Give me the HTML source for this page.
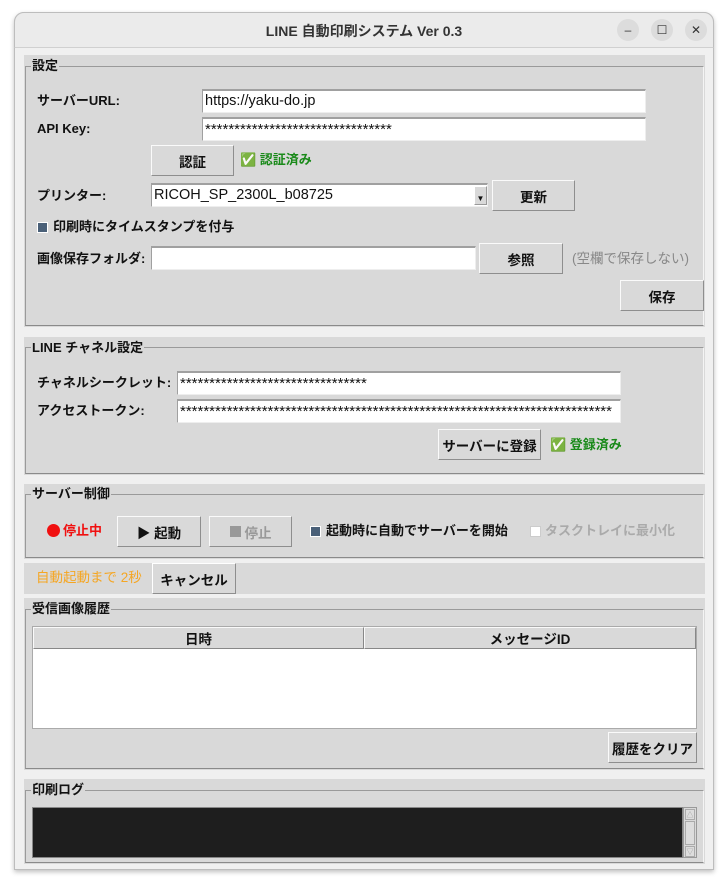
<!DOCTYPE html>
<html><head><meta charset="utf-8"><style>
*{box-sizing:border-box;margin:0;padding:0}
body{width:728px;height:886px;background:#fff;position:relative;overflow:hidden;font-family:"Liberation Sans","Noto Sans CJK JP",sans-serif;font-size:13px;color:#111}
.a{position:absolute}
.win{left:14px;top:12px;width:700px;height:858px;background:#f0f0f0;border:1px solid #bdbdbd;border-radius:10px 10px 0 0;box-shadow:0 2px 5px rgba(0,0,0,.25)}
.tb{left:14px;top:12px;width:700px;height:36px;background:#ebebeb;border-radius:10px 10px 0 0;border:1px solid #bdbdbd;border-bottom:1px solid #d0d0d0;text-align:center;line-height:36px;font-weight:bold;font-size:14px;color:#333}
.cb{width:22px;height:22px;border-radius:50%;background:#dcdcdc;top:19px;text-align:center;line-height:22px;font-size:12px;color:#333}
.sec{background:#d9d9d9;left:24px;width:681px}
.fr{border:1px solid #9a9a9a;border-right-color:#f4f4f4;border-bottom-color:#8a8a8a;left:25px;width:679px}
.lg{background:#d9d9d9;font-weight:bold;padding:0 1px;line-height:16px}
.t{font-weight:bold;line-height:16px;white-space:nowrap}
.e{background:#fff;border-top:2px solid #a0a0a0;border-left:1px solid #a0a0a0;border-right:1px solid #eee;border-bottom:1px solid #eee;padding-left:2px;line-height:20px;white-space:nowrap;overflow:hidden;font-size:14.5px}
.s{font-size:15px;line-height:22px;letter-spacing:0}
.b{background:#d9d9d9;border:1px solid #8e8e8e;border-top-color:#fafafa;border-left-color:#fafafa;text-align:center;font-weight:bold;display:flex;align-items:center;justify-content:center;font-size:13.5px}
.g{color:#1a8a1a}
.ck{width:11px;height:11px;background:#4a6078;border:1px solid #fff}
</style></head><body>
<div class="a win"></div>
<div class="a tb">LINE 自動印刷システム Ver 0.3</div>
<div class="a cb" style="left:617px">–</div>
<div class="a cb" style="left:651px">☐</div>
<div class="a cb" style="left:685px">✕</div>

<!-- section 1 -->
<div class="a sec" style="top:55px;height:272px"></div>
<div class="a fr" style="top:66px;height:260px"></div>
<div class="a lg" style="left:31px;top:58px">設定</div>
<div class="a t" style="left:37px;top:93px">サーバーURL:</div>
<div class="a e" style="left:202px;top:89px;width:444px;height:24px">https://yaku-do.jp</div>
<div class="a t" style="left:37px;top:121px">API Key:</div>
<div class="a e s" style="left:202px;top:117px;width:444px;height:24px">********************************</div>
<div class="a b" style="left:151px;top:145px;width:83px;height:31px">認証</div>
<div class="a t g" style="left:240px;top:152px">✅ 認証済み</div>
<div class="a t" style="left:37px;top:188px">プリンター:</div>
<div class="a e" style="left:151px;top:183px;width:337px;height:24px">RICOH_SP_2300L_b08725</div>
<div class="a" style="left:474px;top:186px;width:13px;height:19px;background:#d9d9d9;border:1px solid #999;border-top-color:#fff;border-left-color:#fff;font-size:8px;text-align:center;line-height:24px">▼</div>
<div class="a b" style="left:492px;top:180px;width:83px;height:31px">更新</div>
<div class="a ck" style="left:37px;top:222px"></div>
<div class="a t" style="left:53px;top:219px">印刷時にタイムスタンプを付与</div>
<div class="a t" style="left:37px;top:251px">画像保存フォルダ:</div>
<div class="a e" style="left:151px;top:246px;width:325px;height:24px"></div>
<div class="a b" style="left:479px;top:243px;width:84px;height:31px">参照</div>
<div class="a t" style="left:572px;top:251px;color:#888;font-weight:normal;font-size:13.5px">(空欄で保存しない)</div>
<div class="a b" style="left:620px;top:280px;width:84px;height:31px">保存</div>

<!-- section 2 -->
<div class="a sec" style="top:337px;height:138px"></div>
<div class="a fr" style="top:347px;height:127px"></div>
<div class="a lg" style="left:31px;top:340px">LINE チャネル設定</div>
<div class="a t" style="left:37px;top:375px">チャネルシークレット:</div>
<div class="a e s" style="left:177px;top:371px;width:444px;height:24px">********************************</div>
<div class="a t" style="left:37px;top:403px">アクセストークン:</div>
<div class="a e s" style="left:177px;top:399px;width:444px;height:24px">**************************************************************************</div>
<div class="a b" style="left:438px;top:429px;width:103px;height:31px">サーバーに登録</div>
<div class="a t g" style="left:550px;top:437px">✅ 登録済み</div>

<!-- section 3 -->
<div class="a sec" style="top:484px;height:75px"></div>
<div class="a fr" style="top:494px;height:64px"></div>
<div class="a lg" style="left:31px;top:486px">サーバー制御</div>
<div class="a" style="left:47px;top:524px;width:13px;height:13px;border-radius:50%;background:#f01010"></div>
<div class="a t" style="left:63px;top:523px;color:#f01010">停止中</div>
<div class="a b" style="left:117px;top:516px;width:84px;height:31px">▶ 起動</div>
<div class="a b" style="left:209px;top:516px;width:83px;height:31px;color:#999"><span style="display:inline-block;width:11px;height:11px;background:#999;margin-right:4px"></span>停止</div>
<div class="a ck" style="left:310px;top:526px"></div>
<div class="a t" style="left:326px;top:523px">起動時に自動でサーバーを開始</div>
<div class="a ck" style="left:530px;top:526px;background:#fff;border-color:#ccc"></div>
<div class="a t" style="left:545px;top:523px;color:#aaa">タスクトレイに最小化</div>

<!-- autostart -->
<div class="a sec" style="top:563px;height:31px"></div>
<div class="a t" style="left:36px;top:570px;color:#f5a623;font-weight:normal;font-size:13.5px">自動起動まで 2秒</div>
<div class="a b" style="left:152px;top:563px;width:84px;height:31px;border-color:#fff #8e8e8e #8e8e8e #fff">キャンセル</div>

<!-- section 4 -->
<div class="a sec" style="top:598px;height:172px"></div>
<div class="a fr" style="top:609px;height:160px"></div>
<div class="a lg" style="left:31px;top:601px">受信画像履歴</div>
<div class="a" style="left:32px;top:626px;width:665px;height:103px;background:#fff;border:1px solid #aaa"></div>
<div class="a b" style="left:33px;top:627px;width:331px;height:22px;border-color:#fafafa #888 #888 #fafafa">日時</div>
<div class="a b" style="left:364px;top:627px;width:332px;height:22px;border-color:#fafafa #888 #888 #fafafa">メッセージID</div>
<div class="a b" style="left:608px;top:732px;width:89px;height:31px">履歴をクリア</div>

<!-- section 5 -->
<div class="a sec" style="top:779px;height:85px"></div>
<div class="a fr" style="top:790px;height:73px"></div>
<div class="a lg" style="left:31px;top:782px">印刷ログ</div>
<div class="a" style="left:32px;top:807px;width:651px;height:51px;background:#1e1e1e;border:1px solid #888"></div>
<div class="a" style="left:683px;top:807px;width:14px;height:51px;background:#d9d9d9;border:1px solid #999"></div>
<div class="a" style="left:685px;top:809px;width:10px;height:11px;border:1px solid #aaa;background:#ddd;font-size:7px;text-align:center;color:#999">△</div>
<div class="a" style="left:685px;top:821px;width:10px;height:24px;border:1px solid #aaa;background:#ddd"></div>
<div class="a" style="left:685px;top:846px;width:10px;height:11px;border:1px solid #aaa;background:#ddd;font-size:7px;text-align:center;color:#999">▽</div>
</body></html>
